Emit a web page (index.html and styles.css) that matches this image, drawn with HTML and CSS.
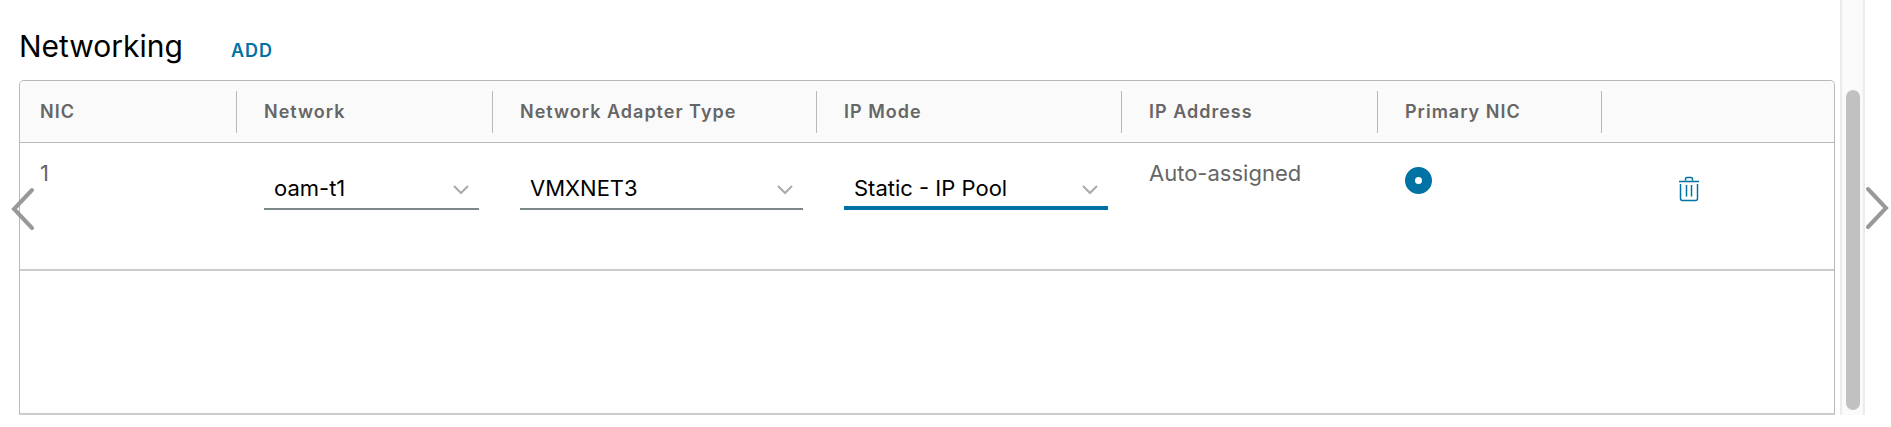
FILE: index.html
```html
<!DOCTYPE html>
<html lang="en">
<head>
<meta charset="utf-8">
<title>Networking</title>
<link rel="stylesheet" href="styles.css">
</head>
<body>
<div class="page">
  <button class="pager pager-prev" type="button" aria-label="Previous">
    <svg class="pager-icon" viewBox="0 0 24 44"><path d="M21 3 3 22 21 41"/></svg>
  </button>
  <main class="content">
    <header class="section-header">
      <h2 class="section-title">Networking</h2>
      <button class="add-button" type="button">ADD</button>
    </header>
    <div class="datagrid">
      <table class="grid-table">
        <colgroup>
          <col class="col-nic"><col class="col-network"><col class="col-adapter"><col class="col-mode"><col class="col-address"><col class="col-primary"><col>
        </colgroup>
        <thead>
          <tr>
            <th scope="col"><div class="head-cell">NIC</div></th>
            <th scope="col"><div class="head-cell">Network</div></th>
            <th scope="col"><div class="head-cell">Network Adapter Type</div></th>
            <th scope="col"><div class="head-cell">IP Mode</div></th>
            <th scope="col"><div class="head-cell">IP Address</div></th>
            <th scope="col"><div class="head-cell">Primary NIC</div></th>
            <th><div class="head-cell"></div></th>
          </tr>
        </thead>
        <tbody>
          <tr>
            <td>1</td>
            <td>
              <div class="select-wrap">
                <select class="select" aria-label="Network"><option>oam-t1</option></select>
                <svg class="caret" viewBox="0 0 16 10"><path d="M1 1 8 8 15 1"/></svg>
              </div>
            </td>
            <td>
              <div class="select-wrap">
                <select class="select" aria-label="Network Adapter Type"><option>VMXNET3</option></select>
                <svg class="caret" viewBox="0 0 16 10"><path d="M1 1 8 8 15 1"/></svg>
              </div>
            </td>
            <td>
              <div class="select-wrap">
                <select class="select select-active" aria-label="IP Mode"><option>Static - IP Pool</option></select>
                <svg class="caret" viewBox="0 0 16 10"><path d="M1 1 8 8 15 1"/></svg>
              </div>
            </td>
            <td>Auto-assigned</td>
            <td><input class="radio" type="radio" name="primary" aria-label="Primary NIC" checked></td>
            <td>
              <button class="delete-button" type="button" aria-label="Delete">
                <svg class="trash" viewBox="0 0 22 26"><path d="M1 5.500H21M7.500 4.500V3Q7.500 1.500 9 1.500H13Q14.500 1.500 14.500 3V4.500M2.500 8V22.500Q2.500 24.500 4.500 24.500H17.500Q19.500 24.500 19.500 22.500V8M8.500 9V20.500M13.500 9V20.500"/></svg>
              </button>
            </td>
          </tr>
        </tbody>
      </table>
    </div>
  </main>
  <div class="scroll-track"><div class="scroll-thumb"></div></div>
  <div class="gutter">
    <button class="pager" type="button" aria-label="Next">
      <svg class="pager-icon" viewBox="0 0 24 44"><path d="M3 3 21 22 3 41"/></svg>
    </button>
  </div>
</div>
</body>
</html>
```
FILE: styles.css
```css
* {
  box-sizing: border-box;
}

body {
  margin: 0;
  background: #fff;
  color: #000;
  font-family: Inter, "Liberation Sans", sans-serif;
  font-size: 22px;
}

button {
  padding: 0;
  border: 0;
  background: none;
  font-family: inherit;
  cursor: pointer;
}

svg {
  display: block;
  fill: none;
}

.page {
  position: relative;
  display: flex;
  min-height: 100vh;
  padding-bottom: 12px;
}

.content {
  display: flex;
  flex: 1;
  flex-direction: column;
  padding: 24px 5px 0 19px;
}

.section-header {
  display: flex;
  align-items: baseline;
  gap: 48px;
  height: 56px;
}

.section-title {
  margin: 0;
  font-size: 30px;
  font-weight: 400;
  line-height: 44px;
}

.add-button {
  color: #0072a3;
  font-size: 18px;
  font-weight: 600;
  letter-spacing: 1px;
}

.datagrid {
  flex: 1;
  overflow: hidden;
  border: 1px solid #b8b8b8;
  border-bottom: 2px solid #ccc;
  border-radius: 5px 5px 0 0;
}

.grid-table {
  width: 100%;
  border-collapse: separate;
  border-spacing: 0;
  table-layout: fixed;
}

.col-nic { width: 216px; }
.col-network { width: 256px; }
.col-adapter { width: 324px; }
.col-mode { width: 305px; }
.col-address { width: 256px; }
.col-primary { width: 224px; }

th {
  height: 62px;
  padding: 0;
  border-bottom: 1px solid #b8b8b8;
  background: #fafafa;
  color: #666;
  font-size: 18px;
  font-weight: 600;
  letter-spacing: 1px;
  text-align: left;
}

.head-cell {
  height: 42px;
  padding-left: 27px;
  border-left: 1px solid #b8b8b8;
  line-height: 42px;
}

th:first-child .head-cell {
  padding-left: 20px;
  border-left: 0;
}

td {
  height: 128px;
  padding: 16px 13px 0 28px;
  border-bottom: 2px solid #ccc;
  color: #666;
  line-height: 28px;
  vertical-align: top;
}

td:first-child {
  padding-left: 20px;
}

.select-wrap {
  position: relative;
  padding-top: 8px;
}

.select {
  display: block;
  width: 100%;
  height: 43px;
  padding: 0 40px 0 10px;
  border: 0;
  border-bottom: 2px solid #7b8788;
  border-radius: 0;
  outline: 0;
  appearance: none;
  background: transparent;
  color: #000;
  font: inherit;
}

.select-active {
  padding-top: 2px;
  border-bottom: 4px solid #0072a3;
}

.caret {
  position: absolute;
  right: 10px;
  bottom: 15px;
  width: 16px;
  height: 10px;
  stroke: #aaa;
  stroke-width: 2;
  pointer-events: none;
}

.radio {
  display: block;
  width: 27px;
  height: 27px;
  margin: 8px 0 0;
  border: 10px solid #0072a3;
  border-radius: 50%;
  appearance: none;
  background: #fff;
}

.delete-button {
  display: block;
  margin: 17px 0 0 49px;
}

.trash {
  width: 22px;
  height: 26px;
  stroke: #0072a3;
  stroke-width: 1.5;
}

.scroll-track {
  display: flex;
  width: 25px;
  flex-direction: column;
  justify-content: flex-end;
  padding: 0 4px 5px;
  border: solid #ebebeb;
  border-width: 0 2px;
  background: #fafafa;
}

.scroll-thumb {
  width: 14px;
  height: 78%;
  border-radius: 7px;
  background: #c1c1c1;
}

.gutter {
  display: flex;
  width: 26px;
  align-items: center;
  justify-content: flex-start;
}

.pager-icon {
  width: 24px;
  height: 44px;
  stroke: #999;
  stroke-linecap: round;
  stroke-width: 4;
}

.pager-prev {
  position: absolute;
  top: 187px;
  left: 11px;
}
```
